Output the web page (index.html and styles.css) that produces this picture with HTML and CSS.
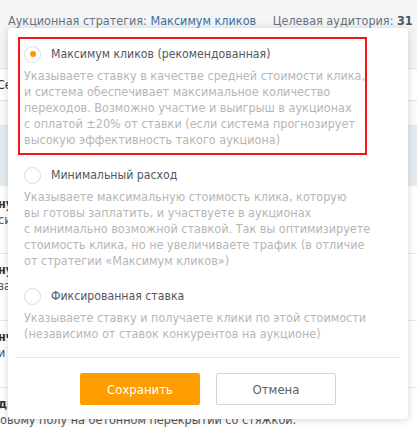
FILE: index.html
```html
<!DOCTYPE html>
<html lang="ru">
<head>
<meta charset="utf-8">
<title>Стратегия</title>
<link rel="stylesheet" href="styles.css">
</head>
<body>
<div class="page">
  <div class="top">
    <div class="summary">
      <span class="label">Аукционная стратегия:</span>
      <span class="link">Максимум кликов</span>
      <span class="label aud">Целевая аудитория: <b>31</b></span>
    </div>
  </div>
  <div class="subhead">Се</div>
  <div class="spacer"></div>
  <div class="band"></div>
  <div class="row first"><div class="rt">нукс</div><div class="rd">си</div></div>
  <div class="row"><div class="rt">нукс</div><div class="rd">за</div></div>
  <div class="row"><div class="rt">нчик</div><div class="rd">и</div></div>
  <div class="row"><div class="rt">дкое</div><div class="rd last">овому полу на бетонном перекрытии со стяжкой.</div></div>

  <div class="modal">
    <div class="options">
      <div class="option highlight">
        <div class="head"><span class="radio checked"></span><span class="title">Максимум кликов (рекомендованная)</span></div>
        <div class="desc">Указываете ставку в качестве средней стоимости клика,<br>и система обеспечивает максимальное количество<br>переходов. Возможно участие и выигрыш в аукционах<br>с оплатой ±20% от ставки (если система прогнозирует<br>высокую эффективность такого аукциона)</div>
      </div>
      <div class="option">
        <div class="head"><span class="radio"></span><span class="title">Минимальный расход</span></div>
        <div class="desc">Указываете максимальную стоимость клика, которую<br>вы готовы заплатить, и участвуете в аукционах<br>с минимально возможной ставкой. Так вы оптимизируете<br>стоимость клика, но не увеличиваете трафик (в отличие<br>от стратегии «Максимум кликов»)</div>
      </div>
      <div class="option">
        <div class="head"><span class="radio"></span><span class="title">Фиксированная ставка</span></div>
        <div class="desc">Указываете ставку и получаете клики по этой стоимости<br>(независимо от ставок конкурентов на аукционе)</div>
      </div>
    </div>
    <div class="divider"></div>
    <div class="actions">
      <button class="btn save">Сохранить</button>
      <button class="btn cancel">Отмена</button>
    </div>
  </div>
</div>
</body>
</html>
```

FILE: styles.css
```css
* { box-sizing: border-box; }
html, body { margin: 0; padding: 0; }
body {
  width: 417px;
  height: 431px;
  overflow: hidden;
  font-family: "DejaVu Sans Condensed", "DejaVu Sans", sans-serif;
  font-size: 12.5px;
  background: #ffffff;
}
.page {
  position: relative;
  width: 417px;
  height: 431px;
  overflow: hidden;
}
.top {
  height: 69px;
  background: #f3f5f7;
  border-bottom: 1px solid #dde2e6;
  padding: 12px 0 0 8px;
}
.summary {
  line-height: 18px;
  white-space: nowrap;
  color: #6a737b;
  font-size: 12.5px;
}
.link {
  color: #3d6f9f;
  border-bottom: 1px dotted #3d6f9f;
}
.aud { margin-left: 13px; }
.aud b { color: #4c555d; }
.subhead {
  height: 32px;
  border-bottom: 1px solid #dde2e6;
  line-height: 31px;
  margin-left: -3px;
  color: #333;
}
.spacer { height: 24px; background: #fafbfc; }
.band { height: 61px; background: #e5ecef; }
.row {
  height: 67px;
  border-top: 1px solid #e3e7ea;
  padding-top: 8px;
  margin-left: -2px;
  white-space: nowrap;
}
.row.first { border-top: none; padding-top: 10px; }
.rt { font-weight: bold; color: #333; line-height: 16px; }
.rd { color: #555; line-height: 16px; }
.rd.last { margin-left: 2px; }

.modal {
  position: absolute;
  left: 8px;
  top: 28px;
  width: 400px;
  height: 391px;
  background: #fff;
  border-radius: 4px;
  box-shadow: 0 1px 8px rgba(0, 0, 0, 0.16);
  padding: 9px 0 0 0;
}
.options {
  display: flex;
  flex-direction: column;
  gap: 3px;
  padding-left: 10px;
}
.option {
  width: 349px;
  border: 2px solid transparent;
  padding: 6px 4px 5px 4px;
}
.option.highlight { border-color: #f5141a; }
.head {
  display: flex;
  align-items: center;
  height: 18px;
  margin-bottom: 5px;
}
.radio {
  width: 17px;
  height: 17px;
  border-radius: 50%;
  border: 1px solid #d8dbde;
  background: #fff;
  display: flex;
  align-items: center;
  justify-content: center;
  flex: none;
}
.radio.checked::after {
  content: "";
  width: 6px;
  height: 6px;
  border-radius: 50%;
  background: #ff9900;
}
.title {
  margin-left: 10px;
  font-size: 12.2px;
  color: #50575e;
  line-height: 18px;
  white-space: nowrap;
}
.desc {
  color: #b6b6b6;
  font-size: 12.5px;
  line-height: 16px;
  white-space: nowrap;
}
.divider {
  height: 1px;
  background: #e3e8ec;
  margin: 8px 8px 0 8px;
}
.actions {
  display: flex;
  justify-content: center;
  gap: 16px;
  padding-top: 15px;
}
.btn {
  width: 120px;
  height: 32px;
  font-family: "DejaVu Sans Condensed", "DejaVu Sans", sans-serif;
  font-size: 13px;
  border-radius: 2px;
  cursor: pointer;
}
.save {
  background: #ff9c00;
  border: 1px solid #ff9c00;
  color: #fff;
}
.cancel {
  background: #fff;
  border: 1px solid #d3d7db;
  color: #5b6269;
}
```
